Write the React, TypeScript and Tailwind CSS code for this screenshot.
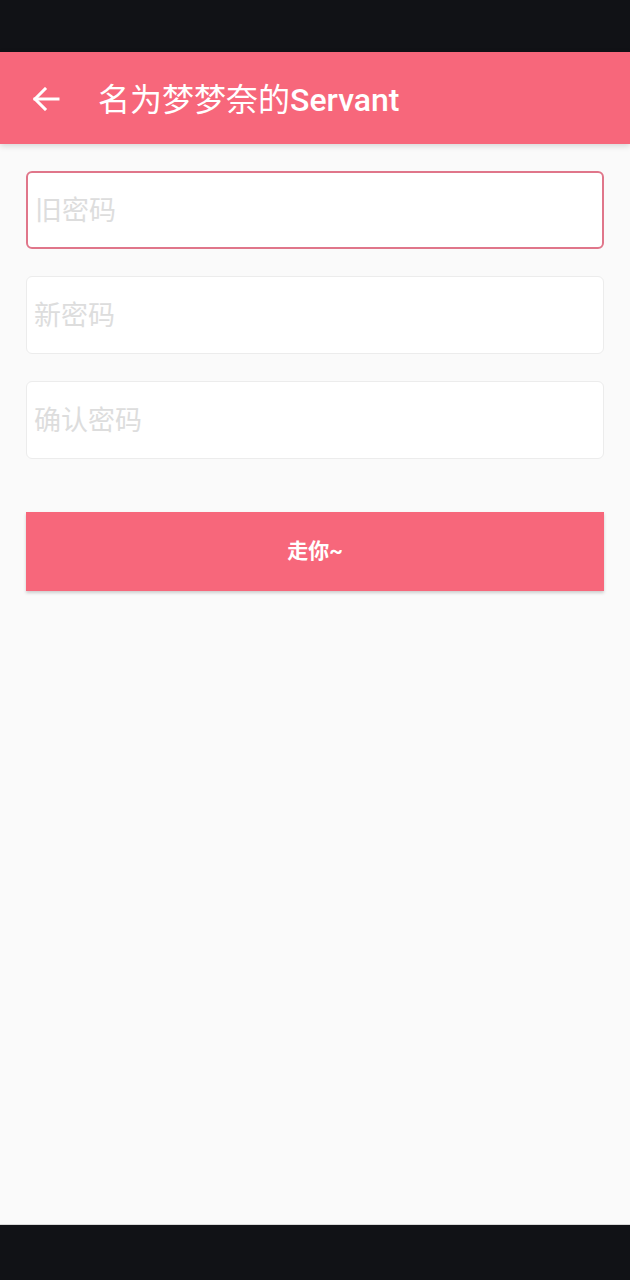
import React from "react";

export default function App() {
  const font = { fontFamily: 'Roboto, "Noto Sans CJK SC", "Noto Sans", sans-serif' };
  return (
    <div className="w-[630px] h-[1280px] flex flex-col bg-[#fafafa]" style={font}>
      <div className="h-[52px] bg-[#111216] shrink-0" />
      <div className="h-[92px] bg-[#f7677b] shrink-0 flex items-center shadow-[0_2px_6px_rgba(0,0,0,0.15)] relative z-10">
        <div className="w-[98px] flex items-center pl-[32px] pt-[2px]">
          <svg width="28" height="24" viewBox="0 0 28 24" fill="none" stroke="white" strokeWidth="3" strokeLinecap="square">
            <path d="M3 12 H26" />
            <path d="M13 2 L3 12 L13 22" strokeLinejoin="miter" />
          </svg>
        </div>
        <span className="text-white text-[32px] leading-none pt-[3px]">
          <span className="font-normal">名为梦梦奈的</span>
          <span className="font-medium">Servant</span>
        </span>
      </div>
      <div className="flex-1 px-[26px] pt-[27px] flex flex-col">
        <div className="flex flex-col gap-[27px]">
          <div className="h-[78px] bg-white rounded-[6px] border-2 border-[#e0768a] flex items-center pl-[7px] pt-[3px]">
            <span className="text-[27px] text-[#dddddd] leading-none">旧密码</span>
          </div>
          <div className="h-[78px] bg-white rounded-[6px] border border-[#ececec] flex items-center pl-[7px] pt-[3px]">
            <span className="text-[27px] text-[#dddddd] leading-none">新密码</span>
          </div>
          <div className="h-[78px] bg-white rounded-[6px] border border-[#ececec] flex items-center pl-[7px] pt-[3px]">
            <span className="text-[27px] text-[#dddddd] leading-none">确认密码</span>
          </div>
        </div>
        <div className="mt-[53px] h-[79px] bg-[#f7677b] flex items-center justify-center shadow-[0_2px_3px_rgba(0,0,0,0.18)]">
          <span className="text-white text-[21px] font-bold leading-none">走你~</span>
        </div>
      </div>
      <div className="h-[56px] bg-[#111216] shrink-0 border-t border-[#d8d8d8]" />
    </div>
  );
}
